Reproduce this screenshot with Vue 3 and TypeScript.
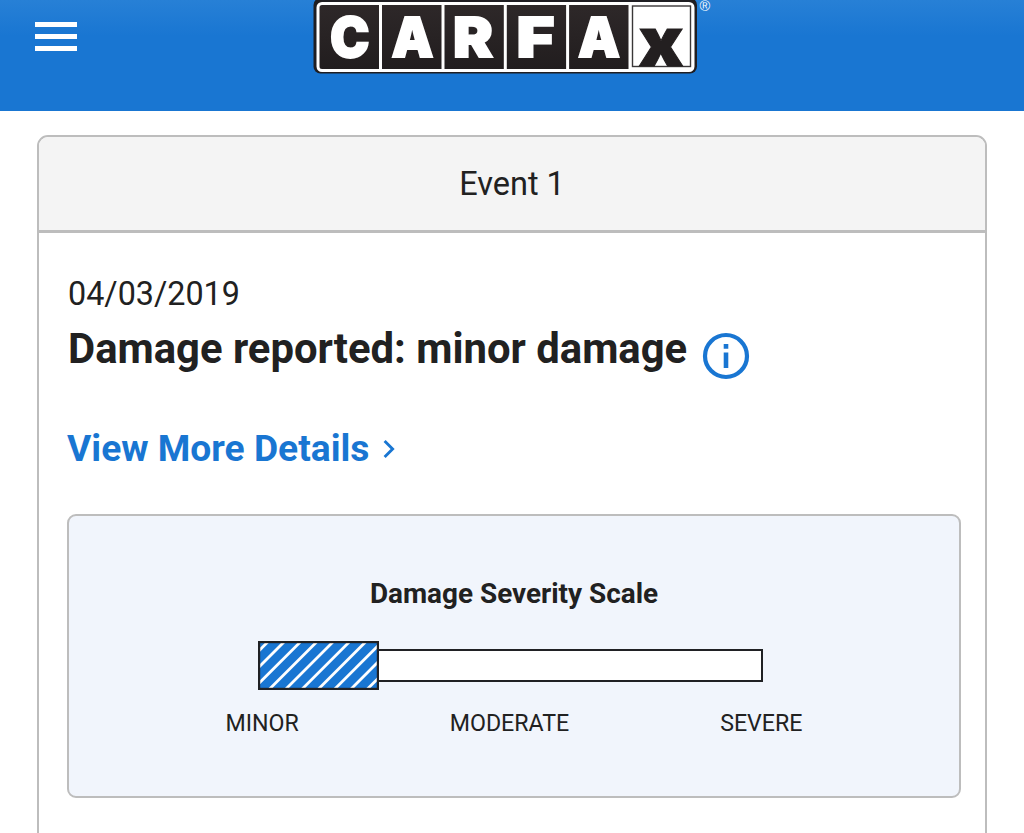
<template>
    <div class="page">
        <header class="topbar">
            <button class="menu" aria-label="Menu">
                <span class="menu__line" />
                <span class="menu__line" />
                <span class="menu__line" />
            </button>
            <svg class="logo" viewBox="0 0 400 76" role="img" aria-label="CARFAX">
                <defs>
                    <linearGradient id="tile" x1="0" y1="0" x2="0" y2="1">
                        <stop offset="0" stop-color="#2e2829" />
                        <stop offset="1" stop-color="#211d1e" />
                    </linearGradient>
                </defs>
                <rect x="1.5" y="-2" width="383.5" height="75.5" rx="7" fill="#1f1e22" />
                <rect x="6" y="3.5" width="375" height="67" rx="4" fill="url(#tile)" stroke="#fff" stroke-width="3" />
                <path v-for="x in dividers" :key="x" :d="`M${x} 3V71`" stroke="#fff" stroke-width="3" />
                <rect x="319" y="5" width="62" height="65" fill="#fff" />
                <rect x="320.5" y="6" width="58" height="60.5" fill="#fff" stroke="#3a3738" stroke-width="1.4" />
                <text
                    v-for="(l, i) in letters"
                    :key="i"
                    class="logo__letter"
                    :x="l.x"
                    y="56.8"
                    :textLength="l.width"
                    lengthAdjust="spacingAndGlyphs"
                >{{ l.char }}</text>
                <text class="logo__x" x="326.5" y="65.6" textLength="45" lengthAdjust="spacingAndGlyphs">x</text>
                <text class="logo__reg" x="387.5" y="11">®</text>
            </svg>
        </header>

        <main class="card">
            <div class="card__head">Event 1</div>
            <div class="card__body">
                <div class="date">04/03/2019</div>
                <div class="title">
                    <h2 class="title__text">Damage reported: minor damage</h2>
                    <svg class="info" viewBox="0 0 48 48">
                        <circle cx="24" cy="24" r="21" fill="none" stroke="#1976d2" stroke-width="4.2" />
                        <path d="M21.7 12h4.6v4.8h-4.6zM21.7 20.5h4.6V36h-4.6z" fill="#1976d2" />
                    </svg>
                </div>
                <a class="more">
                    <span class="more__text">View More Details</span>
                    <svg class="more__arrow" viewBox="0 0 12 20">
                        <path d="M1.6 2 9.6 10l-8 8" fill="none" stroke="#1976d2" stroke-width="2.9" />
                    </svg>
                </a>

                <section class="severity">
                    <h3 class="severity__title">Damage Severity Scale</h3>
                    <div class="scale">
                        <svg class="scale__fill" viewBox="0 0 121 49">
                            <rect width="121" height="49" fill="#1976d2" />
                            <path
                                v-for="x in stripes"
                                :key="x"
                                :d="`M${x + 5} -5L${x - 55} 55`"
                                stroke="#fff"
                                stroke-width="2.8"
                            />
                            <rect x="1.1" y="1.1" width="118.8" height="46.8" fill="none" stroke="#202124" stroke-width="2.2" />
                        </svg>
                        <div class="scale__rail" />
                    </div>
                    <div class="levels">
                        <span v-for="level in levels" :key="level">{{ level }}</span>
                    </div>
                </section>
            </div>
        </main>
    </div>
</template>

<script setup lang="ts">
interface Letter {
    char: string;
    x: number;
    width: number;
}

const letters: Letter[] = [
    { char: 'C', x: 18, width: 39.5 },
    { char: 'A', x: 79.5, width: 42 },
    { char: 'R', x: 141, width: 40 },
    { char: 'F', x: 204.5, width: 38 },
    { char: 'A', x: 266, width: 42 },
];

const dividers = [68.5, 131, 193.3, 255.6, 318];
const levels = ['MINOR', 'MODERATE', 'SEVERE'];

// top edge position of each diagonal stripe
const stripes = Array.from({ length: 11 }, (_, i) => 10.7 + i * 16.3);
</script>

<style>
body {
    margin: 0;
    background: #fff;
}
</style>

<style scoped>
.page {
    box-sizing: border-box;
    width: 1024px;
    height: 833px;
    overflow: hidden;
    font-family: Roboto, sans-serif;
    color: #212121;
}

.topbar {
    box-sizing: border-box;
    display: flex;
    align-items: flex-start;
    height: 111px;
    padding-left: 35px;
    background: linear-gradient(#2780d6 0, #1976d2 36px);
}
.menu {
    display: flex;
    flex-direction: column;
    gap: 7px;
    width: 42px;
    margin: 22px 237px 0 0;
    padding: 0;
    border: 0;
    background: none;
}
.menu__line {
    height: 5px;
    background: #fff;
}
.logo {
    display: block;
    width: 400px;
    height: 76px;
    margin-left: -2px;
    overflow: visible;
}
.logo__letter {
    font: 900 55.5px Inter, sans-serif;
    fill: #fff;
    stroke: #fff;
    stroke-width: 1.8px;
}
.logo__x {
    font: 900 67px Inter, sans-serif;
    fill: #231f20;
    stroke: #231f20;
    stroke-width: 1px;
}
.logo__reg {
    font: 14.5px "Liberation Sans", sans-serif;
    fill: #f4f9fe;
}

.card {
    box-sizing: border-box;
    width: 950px;
    height: 760px;
    margin: 24px 0 0 37px;
    border: 2px solid #bdbdbd;
    border-radius: 11px;
    overflow: hidden;
}
.card__head {
    height: 93px;
    line-height: 95px;
    border-bottom: 3px solid #bdbdbd;
    background: #f4f4f4;
    font-size: 32.5px;
    text-align: center;
}
.card__body {
    padding: 41px 24px 0 28px;
}
.date {
    height: 47px;
    padding-left: 1px;
    line-height: 41px;
    font-size: 32.3px;
}
.title {
    display: flex;
    gap: 15px;
    height: 103px;
    padding-left: 1px;
}
.title__text {
    margin: 0;
    font-size: 41.8px;
    font-weight: 700;
    line-height: 56px;
    white-space: nowrap;
}
.info {
    flex: none;
    width: 48px;
    height: 48px;
    margin-top: 11px;
}
.more {
    display: flex;
    align-items: center;
    gap: 14px;
    height: 48px;
    color: #1976d2;
}
.more__text {
    font-size: 37.2px;
    font-weight: 700;
    line-height: 48px;
}
.more__arrow {
    width: 12px;
    height: 20px;
    margin-top: 2px;
}

.severity {
    box-sizing: border-box;
    display: flex;
    flex-direction: column;
    align-items: center;
    width: 894px;
    height: 284px;
    margin-top: 42px;
    padding-top: 60px;
    border: 2px solid #bdbdbd;
    border-radius: 9px;
    background: #f1f5fc;
}
.severity__title {
    margin: 0;
    font-size: 27.9px;
    font-weight: 700;
    line-height: 36px;
}
.scale {
    display: flex;
    align-items: center;
    width: 505px;
    height: 49px;
    margin: 29px 7px 0 0;
}
.scale__fill {
    flex: none;
    width: 121px;
    height: 49px;
}
.scale__rail {
    box-sizing: border-box;
    flex: 1;
    height: 33px;
    border: 2px solid #202124;
    border-left: 0;
    background: #fff;
}
.levels {
    display: flex;
    justify-content: space-between;
    width: 577px;
    margin-top: 18px;
    font-size: 23.2px;
    line-height: 30px;
}
</style>
